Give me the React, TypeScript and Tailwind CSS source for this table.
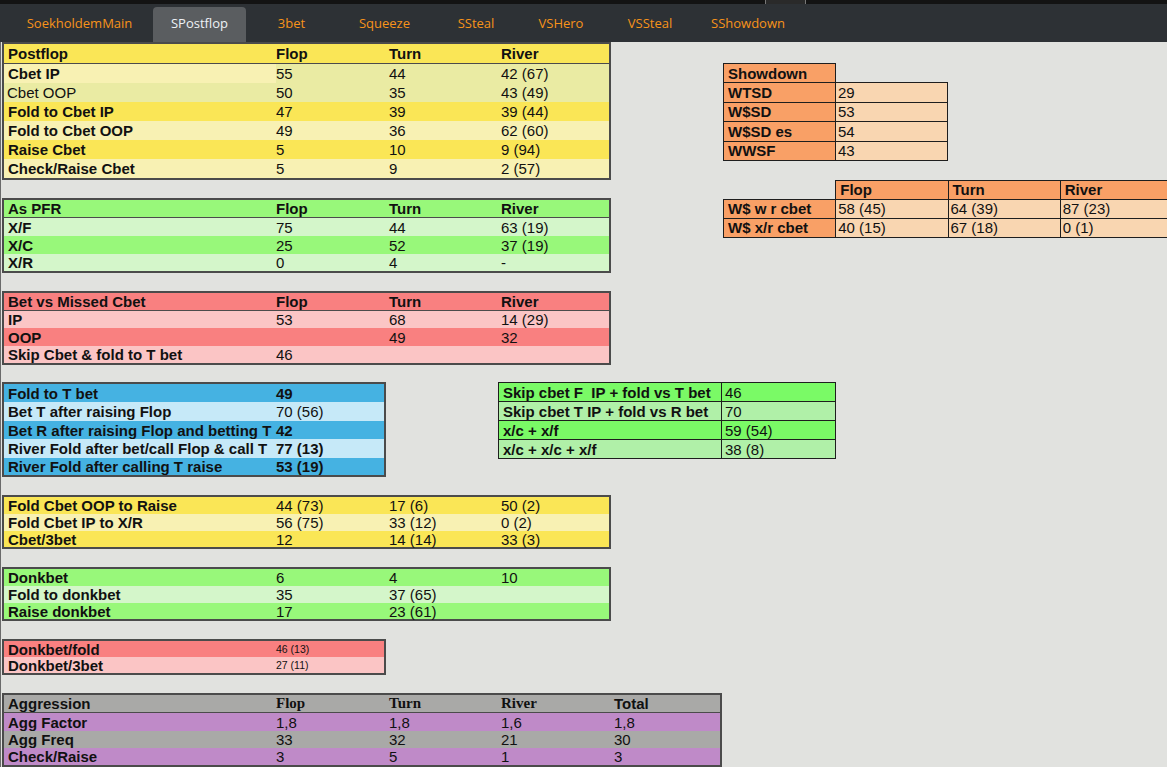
import React from "react";

type Cell = { t: string; b?: boolean; bg?: string; size?: string };
type Row = { cells: (string | Cell)[]; bg: string; h: string; line?: boolean; labelNormal?: boolean; valBold?: boolean };

const SANS = { fontFamily: '"Liberation Sans", Arial, sans-serif' };
const SERIF = '"Liberation Serif", "Times New Roman", serif';

function StatTable({ rows, w, cols }: { rows: Row[]; w: string; cols: string }) {
  return (
    <div className={`border-2 border-[#4b4b4b] ${w}`}>
      {rows.map((r, i) => (
        <div
          key={i}
          className={`grid ${cols} ${r.bg} ${r.h} ${r.line ? "border-b border-[#4b4b4b]" : ""}`}
        >
          {r.cells.map((c, j) => {
            const cell: Cell = typeof c === "string" ? { t: c } : c;
            const bold = cell.b ?? (j === 0 ? !r.labelNormal : !!r.valBold);
            return (
              <div
                key={j}
                className={`flex items-center whitespace-nowrap overflow-visible leading-[17px] text-[#111] ${cell.size ?? "text-[15px]"} ${
                  j === 0 ? (r.labelNormal ? "pl-[3px]" : "pl-[4px]") : "pl-0"
                } ${bold ? "font-bold" : "font-normal"} ${cell.bg ?? ""}`}
              >
                {cell.t}
              </div>
            );
          })}
        </div>
      ))}
    </div>
  );
}

const C4 = "grid-cols-[272px_113px_112px_1fr]";
const C2 = "grid-cols-[272px_1fr]";
const C5 = "grid-cols-[272px_113px_112px_113px_1fr]";

const Y = "bg-[#fae656]";
const YL = "bg-[#f8f1b3]";
const YK = "bg-[#eaeba3]";
const G = "bg-[#98f87a]";
const GL = "bg-[#d4f6ca]";
const R = "bg-[#f98080]";
const RL = "bg-[#fbc5c5]";
const B = "bg-[#45b2e2]";
const BL = "bg-[#c6e9f8]";

const tabs: { t: string; w: string; active?: boolean }[] = [
  { t: "SoekholdemMain", w: "w-[147px]" },
  { t: "SPostflop", w: "w-[93px]", active: true },
  { t: "3bet", w: "w-[91px]" },
  { t: "Squeeze", w: "w-[95px]" },
  { t: "SSteal", w: "w-[88px]" },
  { t: "VSHero", w: "w-[82px]" },
  { t: "VSSteal", w: "w-[96px]" },
  { t: "SShowdown", w: "w-[100px]" },
];

function TabBar() {
  return (
    <div className="shrink-0">
      <div className="h-[4px] bg-[#131313] flex">
        <div className="ml-[765px] w-[41px] h-[4px] bg-[#2a2a2a] border-x border-[#777]" />
      </div>
      <div className="h-[38px] bg-[#2d3135] flex items-end pl-[6px]" style={{ fontFamily: '"Open Sans", "Noto Sans", sans-serif' }}>
        {tabs.map((t) => (
          <div
            key={t.t}
            className={`${t.w} h-[35px] flex items-center justify-center text-[13px] ${
              t.active ? "bg-[#5a5d60] text-[#eef2f6] rounded-t-[4px]" : "text-[#f7931a]"
            }`}
          >
            <span className="-mt-[1px]">{t.t}</span>
          </div>
        ))}
      </div>
    </div>
  );
}

const td = "border border-[#1e1e1e] p-0 text-[15px] leading-[17px] text-[#111] whitespace-nowrap align-middle";
const OR = "bg-[#f9a066]";
const PE = "bg-[#f9d6b1]";

function Showdown() {
  return (
    <div className="ml-[112px] pt-[21px] flex flex-col">
      <table className="border-collapse table-fixed w-[225px]">
        <tbody>
          <tr>
            <td className={`${td} ${OR} w-[112px] font-bold pl-[4px] h-[19.4px]`}>Showdown</td>
            <td className="p-0 w-[112px]"></td>
          </tr>
          {[
            ["WTSD", "29"],
            ["W$SD", "53"],
            ["W$SD es", "54"],
            ["WWSF", "43"],
          ].map(([a, b]) => (
            <tr key={a}>
              <td className={`${td} ${OR} font-bold pl-[4px] h-[19.4px]`}>{a}</td>
              <td className={`${td} ${PE} pl-[2px] h-[19.4px]`}>{b}</td>
            </tr>
          ))}
        </tbody>
      </table>
      <table className="border-collapse table-fixed w-[450px] mt-[19px]">
        <tbody>
          <tr>
            <td className="p-0 w-[112px]"></td>
            {["Flop", "Turn", "River"].map((h) => (
              <td key={h} className={`${td} ${OR} w-[112px] font-bold pl-[4px] h-[19px]`}>{h}</td>
            ))}
          </tr>
          {[
            ["W$ w r cbet", "58 (45)", "64 (39)", "87 (23)"],
            ["W$ x/r cbet", "40 (15)", "67 (18)", "0 (1)"],
          ].map((r) => (
            <tr key={r[0]}>
              <td className={`${td} ${OR} font-bold pl-[4px] h-[19px]`}>{r[0]}</td>
              {r.slice(1).map((v, i) => (
                <td key={i} className={`${td} ${PE} pl-[2px] h-[19px]`}>{v}</td>
              ))}
            </tr>
          ))}
        </tbody>
      </table>
    </div>
  );
}

function SkipTable() {
  const rows = [
    { a: "Skip cbet F  IP + fold vs T bet", b: "46", bg: "bg-[#7afa66]", h: "h-[19px] border-b" },
    { a: "Skip cbet T IP + fold vs R bet", b: "70", bg: "bg-[#b0f0a8]", h: "h-[19px] border-b" },
    { a: "x/c + x/f", b: "59 (54)", bg: "bg-[#7afa66]", h: "h-[19px] border-b" },
    { a: "x/c + x/c + x/f", b: "38 (8)", bg: "bg-[#b0f0a8]", h: "h-[18px]" },
  ];
  return (
    <div className="ml-[112px] w-[338px] border border-[#1e1e1e]">
      {rows.map((r) => (
        <div key={r.a} className={`grid grid-cols-[223px_1fr] ${r.bg} ${r.h} border-[#1e1e1e]`}>
          <div className="flex items-center pl-[4px] font-bold text-[15px] leading-[17px] text-[#111] whitespace-pre border-r border-[#1e1e1e]">
            {r.a}
          </div>
          <div className="flex items-center pl-[3px] text-[15px] leading-[17px] text-[#111]">{r.b}</div>
        </div>
      ))}
    </div>
  );
}

function AggTable({ rows }: { rows: Row[] }) {
  return (
    <div className="border-2 border-[#4b4b4b] w-[720px]">
      {rows.map((r, i) => (
        <div key={i} className={`grid ${C5} ${r.bg} ${r.h} ${r.line ? "border-b border-[#4b4b4b]" : ""}`}>
          {r.cells.map((c, j) => {
            const cell: Cell = typeof c === "string" ? { t: c } : c;
            const bold = cell.b ?? j === 0;
            const serif = i === 0 && j >= 1 && j <= 3;
            return (
              <div
                key={j}
                className={`flex items-center whitespace-nowrap text-[15px] leading-[17px] text-[#111] ${j === 0 ? "pl-[4px]" : "pl-0"} ${
                  bold ? "font-bold" : "font-normal"
                }`}
                style={serif ? { fontFamily: SERIF } : undefined}
              >
                {cell.t}
              </div>
            );
          })}
        </div>
      ))}
    </div>
  );
}

export default function App() {
  const t1: Row[] = [
    { cells: ["Postflop", { t: "Flop", b: true }, { t: "Turn", b: true }, { t: "River", b: true }], bg: Y, h: "h-[20px]", line: true },
    { cells: [{ t: "Cbet IP", bg: YL }, "55", "44", "42 (67)"], bg: YK, h: "h-[19px]" },
    { cells: ["Cbet OOP", "50", "35", "43 (49)"], bg: YK, h: "h-[19px]", labelNormal: true },
    { cells: ["Fold to Cbet IP", "47", "39", "39 (44)"], bg: Y, h: "h-[19px]" },
    { cells: ["Fold to Cbet OOP", "49", "36", "62 (60)"], bg: YL, h: "h-[19px]" },
    { cells: ["Raise Cbet", "5", "10", "9 (94)"], bg: Y, h: "h-[19px]" },
    { cells: ["Check/Raise Cbet", "5", "9", "2 (57)"], bg: YL, h: "h-[19px]" },
  ];
  const t2: Row[] = [
    { cells: ["As PFR", { t: "Flop", b: true }, { t: "Turn", b: true }, { t: "River", b: true }], bg: G, h: "h-[18px]", line: true },
    { cells: ["X/F", "75", "44", "63 (19)"], bg: GL, h: "h-[18px]" },
    { cells: ["X/C", "25", "52", "37 (19)"], bg: G, h: "h-[18px]" },
    { cells: ["X/R", "0", "4", "-"], bg: GL, h: "h-[17px]" },
  ];
  const t3: Row[] = [
    { cells: ["Bet vs Missed Cbet", { t: "Flop", b: true }, { t: "Turn", b: true }, { t: "River", b: true }], bg: R, h: "h-[18px]", line: true },
    { cells: ["IP", "53", "68", "14 (29)"], bg: RL, h: "h-[17px]" },
    { cells: ["OOP", "", "49", "32"], bg: R, h: "h-[18px]" },
    { cells: ["Skip Cbet & fold to T bet", "46", "", ""], bg: RL, h: "h-[17px]" },
  ];
  const blue: Row[] = [
    { cells: ["Fold to T bet", "49"], bg: B, h: "h-[18px]", valBold: true },
    { cells: ["Bet T after raising Flop", "70 (56)"], bg: BL, h: "h-[19px]" },
    { cells: ["Bet R after raising Flop and betting T", "42"], bg: B, h: "h-[18px]", valBold: true },
    { cells: ["River Fold after bet/call Flop & call T", "77 (13)"], bg: BL, h: "h-[19px]", valBold: true },
    { cells: ["River Fold after calling T raise", "53 (19)"], bg: B, h: "h-[17px]", valBold: true },
  ];
  const y2: Row[] = [
    { cells: ["Fold Cbet OOP to Raise", "44 (73)", "17 (6)", "50 (2)"], bg: Y, h: "h-[17px]" },
    { cells: ["Fold Cbet IP to X/R", "56 (75)", "33 (12)", "0 (2)"], bg: YL, h: "h-[17px]" },
    { cells: ["Cbet/3bet", "12", "14 (14)", "33 (3)"], bg: Y, h: "h-[16px]" },
  ];
  const g2: Row[] = [
    { cells: ["Donkbet", "6", "4", "10"], bg: G, h: "h-[17px]" },
    { cells: ["Fold to donkbet", "35", "37 (65)", ""], bg: GL, h: "h-[17px]" },
    { cells: ["Raise donkbet", "17", "23 (61)", ""], bg: G, h: "h-[16px]" },
  ];
  const r2: Row[] = [
    { cells: ["Donkbet/fold", { t: "46 (13)", size: "text-[10.5px]" }], bg: R, h: "h-[16px]" },
    { cells: ["Donkbet/3bet", { t: "27 (11)", size: "text-[10.5px]" }], bg: RL, h: "h-[16px]" },
  ];
  const P = "bg-[#bf8ac8]";
  const GR = "bg-[#a9a9a7]";
  const agg: Row[] = [
    {
      cells: ["Aggression", { t: "Flop", b: true }, { t: "Turn", b: true }, { t: "River", b: true }, { t: "Total", b: true }],
      bg: GR,
      h: "h-[18px]",
      line: true,
    },
    { cells: ["Agg Factor", "1,8", "1,8", "1,6", "1,8"], bg: P, h: "h-[18px]" },
    { cells: ["Agg Freq", "33", "32", "21", "30"], bg: GR, h: "h-[17px]" },
    { cells: ["Check/Raise", "3", "5", "1", "3"], bg: P, h: "h-[17px]" },
  ];

  return (
    <div className="w-[1167px] h-[767px] overflow-hidden bg-[#e1e2df] flex flex-col" style={SANS}>
      <TabBar />
      <div className="flex-1 flex flex-col border-l border-[#6a6a6a]">
        <div className="flex items-start">
          <div className="flex flex-col gap-[18px] ml-[1px]">
            <StatTable rows={t1} w="w-[609px]" cols={C4} />
            <StatTable rows={t2} w="w-[609px]" cols={C4} />
            <StatTable rows={t3} w="w-[609px]" cols={C4} />
          </div>
          <Showdown />
        </div>
        <div className="flex items-start mt-[17px] ml-[1px]">
          <StatTable rows={blue} w="w-[384px]" cols={C2} />
          <SkipTable />
        </div>
        <div className="flex flex-col gap-[18px] mt-[18px] ml-[1px]">
          <StatTable rows={y2} w="w-[609px]" cols={C4} />
          <StatTable rows={g2} w="w-[609px]" cols={C4} />
          <StatTable rows={r2} w="w-[384px]" cols={C2} />
          <AggTable rows={agg} />
        </div>
      </div>
    </div>
  );
}
